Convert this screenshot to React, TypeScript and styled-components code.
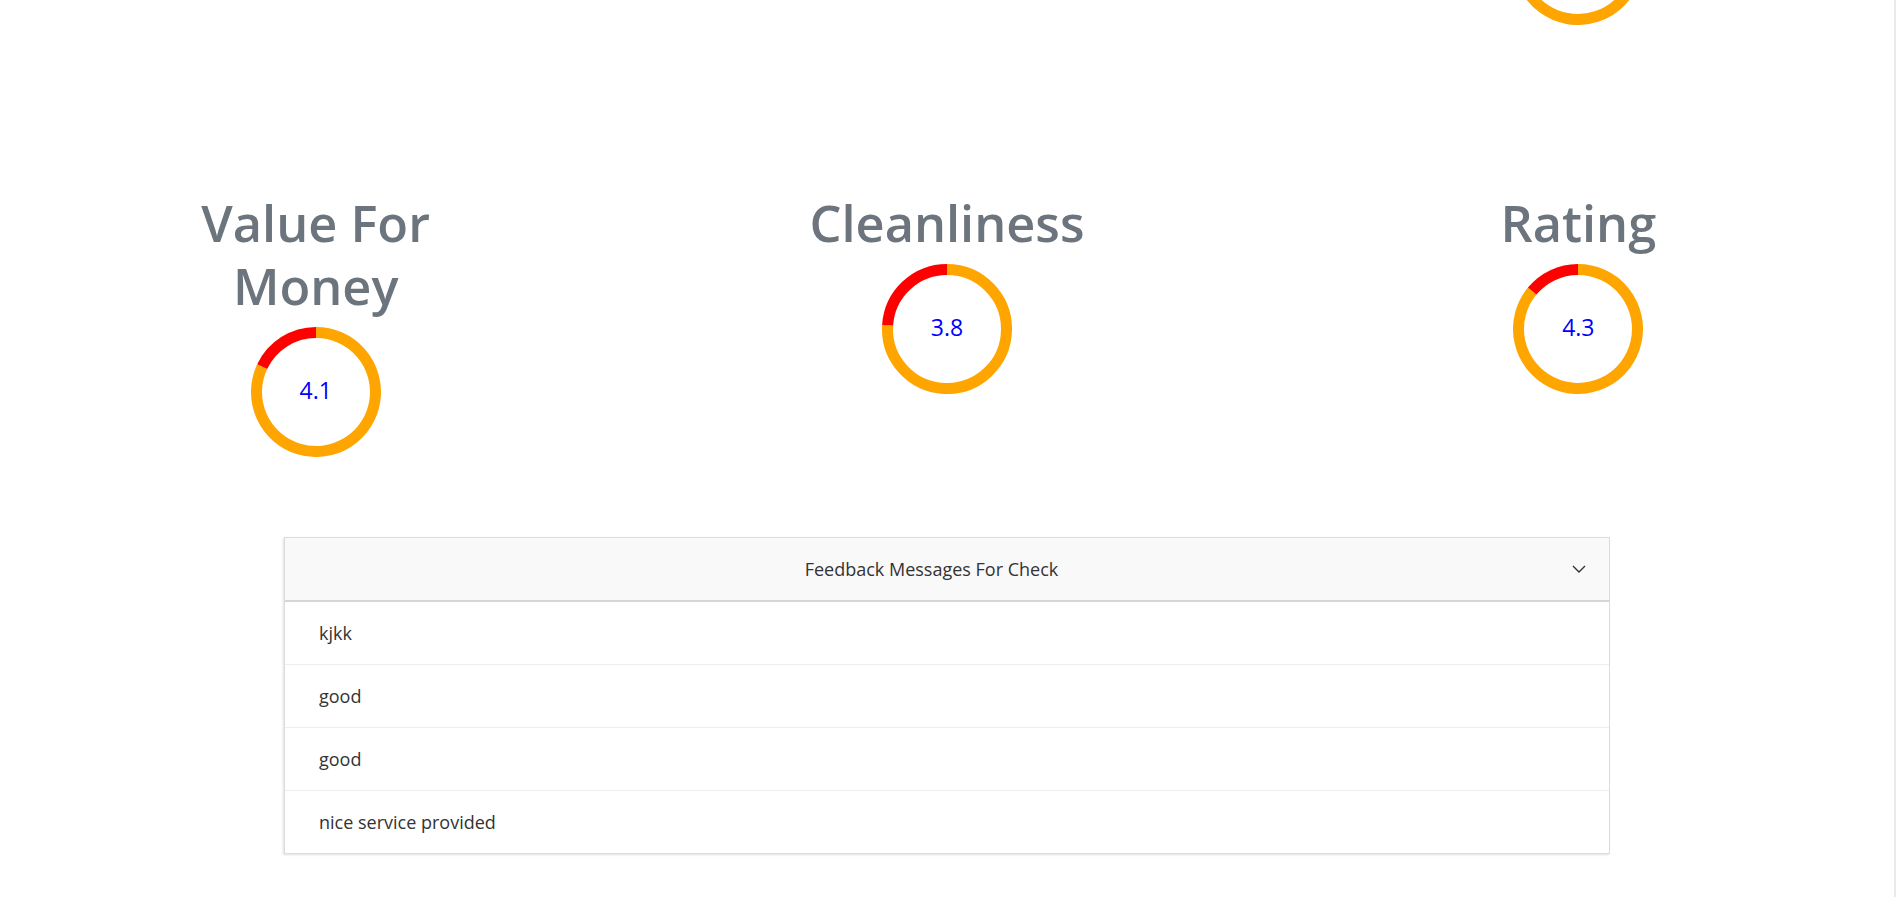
import React from 'react';
import styled, { createGlobalStyle } from 'styled-components';

interface Stat {
    label: string;
    value: number;
}

const stats: Stat[] = [
    { label: 'Value For Money', value: 4.1 },
    { label: 'Cleanliness', value: 3.8 },
    { label: 'Rating', value: 4.3 },
];

const messages = ['kjkk', 'good', 'good', 'nice service provided'];

const SIZE = 130;
const STROKE = 11;

const point = (deg: number, r: number) => {
    const rad = (deg * Math.PI) / 180;
    return `${SIZE / 2 + r * Math.sin(rad)} ${SIZE / 2 - r * Math.cos(rad)}`;
}

const arc = (from: number, to: number) => {
    const r = SIZE / 2 - STROKE / 2;
    const large = to - from > 180 ? 1 : 0;
    return `M ${point(from, r)} A ${r} ${r} 0 ${large} 1 ${point(to, r)}`;
}

const Donut: React.FC<{ value: number; max?: number; showLabel?: boolean }> = ({ value, max = 5, showLabel = true }) => {
    const filled = (value / max) * 360;
    return (
        <DonutWrap>
            <svg width={SIZE} height={SIZE} viewBox={`0 0 ${SIZE} ${SIZE}`}>
                <path d={arc(0, filled)} fill="none" stroke="#ffa500" strokeWidth={STROKE} />
                <path d={arc(filled, 360)} fill="none" stroke="#ff0000" strokeWidth={STROKE} />
            </svg>
            {showLabel && <DonutValue>{value.toFixed(1)}</DonutValue>}
        </DonutWrap>
    )
}

const Chevron = () => (
    <svg width="14" height="8" viewBox="0 0 14 8">
        <path d="M1 1 L7 7 L13 1" fill="none" stroke="#333" strokeWidth="1.4" />
    </svg>
)

const App: React.FC = () => {
    return (
        <>
            <GlobalStyle />
            <Page>
                <StatsGrid>
                    <StatCell />
                    <StatCell />
                    <StatCell>
                        <Donut value={4.5} showLabel={false} />
                    </StatCell>
                    {stats.map(stat => (
                        <StatCell key={stat.label}>
                            <Title>{stat.label}</Title>
                            <Donut value={stat.value} />
                        </StatCell>
                    ))}
                </StatsGrid>

                <Accordion>
                    <Header>
                        <HeaderText>Feedback Messages For Check</HeaderText>
                        <Chevron />
                    </Header>
                    {messages.map((msg, i) => (
                        <Item key={i}>{msg}</Item>
                    ))}
                </Accordion>
            </Page>
            <ScrollEdge />
        </>
    )
}

const GlobalStyle = createGlobalStyle`
    body {
        margin: 0;
        background: #fff;
        font-family: "Open Sans", "Noto Sans", sans-serif;
        color: #333;
    }
`

const Page = styled.div`
    padding: 0 3px 40px 0;
`

const StatsGrid = styled.div`
    display: grid;
    grid-template-columns: repeat(3, 1fr);
    row-gap: 166px;
    margin-top: -105px;
`

const StatCell = styled.div`
    display: flex;
    flex-direction: column;
    align-items: center;
`

const Title = styled.h1`
    margin: 0 0 10px;
    max-width: 320px;
    font-size: 50.5px;
    line-height: 63px;
    font-weight: 600;
    color: #6c757d;
    text-align: center;
`

const DonutWrap = styled.div`
    display: grid;
    place-items: center;
    width: ${SIZE}px;
    height: ${SIZE}px;

    & > * {
        grid-area: 1 / 1;
    }
`

const DonutValue = styled.span`
    font-size: 23px;
    color: #0000ff;
    margin-top: -5px;
`

const Accordion = styled.div`
    width: 1324px;
    margin: 80px auto 0;
    border: 1px solid #dcdcdc;
    box-shadow: -1px 1px 2px rgba(0, 0, 0, 0.12);
`

const Header = styled.div`
    display: flex;
    align-items: center;
    height: 62px;
    padding: 0 23px 0 24px;
    background: #f9f9f9;
    border-bottom: 2px solid #d6d6d6;
`

const HeaderText = styled.div`
    flex: 1;
    text-align: center;
    font-size: 18px;
    color: #333;
    margin-right: 18px;
`

const Item = styled.div`
    display: flex;
    align-items: center;
    height: 62px;
    padding: 0 34px;
    font-size: 18px;
    color: #333;
    border-bottom: 1px solid #eeeeee;

    &:last-child {
        border-bottom: none;
    }
`

const ScrollEdge = styled.div`
    position: fixed;
    top: 0;
    bottom: 0;
    right: 1px;
    width: 2px;
    background: #e9e9e9;
`

export default App;
